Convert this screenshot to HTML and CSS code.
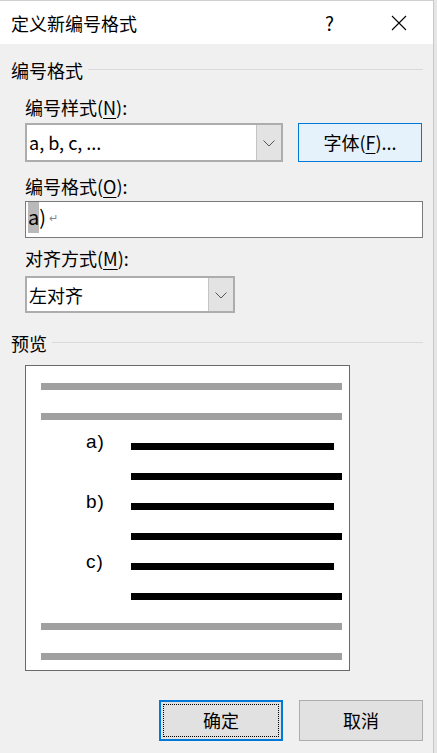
FILE: index.html
```html
<!DOCTYPE html>
<html lang="zh-CN">
<head>
<meta charset="utf-8">
<title>定义新编号格式</title>
<link rel="stylesheet" href="styles.css">
</head>
<body>
<div class="window">
  <div class="titlebar">
    <span class="title">定义新编号格式</span>
    <span class="help">?</span>
    <span class="close">
      <svg width="16" height="16" viewBox="0 0 16 16"><path d="M1 1 L15 15 M15 1 L1 15" stroke="#000" stroke-width="1.1" fill="none"/></svg>
    </span>
  </div>
  <div class="content">
    <div class="group-head"><span>编号格式</span><i class="rule"></i></div>
    <div class="label l-n">编号样式(<u>N</u>):</div>
    <div class="row-n">
      <div class="combo combo-wide">
        <span class="combo-text">a, b, c, ...</span>
        <span class="combo-btn"><svg width="12" height="7" viewBox="0 0 12 7"><path d="M0.5 0.5 L6 6 L11.5 0.5" stroke="#555" stroke-width="1" fill="none"/></svg></span>
      </div>
      <div class="font-btn">字体(<u>F</u>)...</div>
    </div>
    <div class="label l-o">编号格式(<u>O</u>):</div>
    <div class="textfield"><span class="sel">a</span><span class="paren">)</span><span class="ret">↵</span></div>
    <div class="label l-m">对齐方式(<u>M</u>):</div>
    <div class="combo combo-narrow">
      <span class="combo-text">左对齐</span>
      <span class="combo-btn"><svg width="12" height="7" viewBox="0 0 12 7"><path d="M0.5 0.5 L6 6 L11.5 0.5" stroke="#555" stroke-width="1" fill="none"/></svg></span>
    </div>
    <div class="group-head gh-preview"><span>预览</span><i class="rule"></i></div>
    <div class="preview">
      <div class="prow"><i class="gbar"></i></div>
      <div class="prow"><i class="gbar"></i></div>
      <div class="prow"><span class="plabel">a)</span><i class="bbar short"></i></div>
      <div class="prow"><span class="plabel"></span><i class="bbar long"></i></div>
      <div class="prow"><span class="plabel">b)</span><i class="bbar short"></i></div>
      <div class="prow"><span class="plabel"></span><i class="bbar long"></i></div>
      <div class="prow"><span class="plabel">c)</span><i class="bbar short"></i></div>
      <div class="prow"><span class="plabel"></span><i class="bbar long"></i></div>
      <div class="prow"><i class="gbar"></i></div>
      <div class="prow"><i class="gbar"></i></div>
    </div>
    <div class="buttons">
      <div class="btn btn-ok"><span class="focus">确定</span></div>
      <div class="btn">取消</div>
    </div>
  </div>
</div>
</body>
</html>
```
FILE: styles.css
```css
* { box-sizing: border-box; }
html, body { margin: 0; padding: 0; }
body {
  background: #e6e6e6;
  font-family: "Noto Sans CJK SC", "Noto Sans", sans-serif;
  color: #000;
  width: 437px;
  height: 753px;
  overflow: hidden;
}
.window {
  width: 434px;
  height: 753px;
  background: #f0f0f0;
  border-right: 1px solid #c8c8c8;
  border-top: 1px solid #d0d0d0;
}
.titlebar {
  height: 43px;
  background: #fff;
  display: flex;
  align-items: center;
  padding-left: 11px;
}
.title { font-size: 18px; line-height: 24px; flex: 1; }
.help { font-size: 19px; line-height: 24px; width: 66px; text-align: left; }
.close { width: 42px; display: flex; align-items: center; padding-left: 0; }
.close svg { display: block; }

.content { padding: 0 10px 0 11px; display: flex; flex-direction: column; }
.group-head {
  display: flex;
  align-items: center;
  height: 24px;
  margin-top: 14px;
  font-size: 18px;
  line-height: 24px;
}
.group-head .rule {
  flex: 1;
  height: 1px;
  background: #dadada;
  margin-left: 5px;
  margin-top: -2px;
}
.gh-preview { margin-top: 18px; }

.label { font-size: 18px; line-height: 24px; height: 24px; padding-left: 14px; }
.label u { text-decoration-thickness: 1px; text-underline-offset: 3px; }
.l-n { margin-top: 13px; }
.l-o { margin-top: 12px; }
.l-m { margin-top: 8px; }

.row-n { display: flex; margin-top: 4px; margin-left: 14px; gap: 15px; }
.combo {
  display: flex;
  background: #fff;
  border: 2px solid #adadad;
}
.combo-wide { width: 258px; height: 39px; }
.combo-narrow { width: 210px; height: 37px; margin-left: 14px; margin-top: 6px; }
.combo-text { flex: 1; font-size: 18px; line-height: 35px; padding-left: 2px; }
.combo-btn {
  width: 25px;
  background: #e3e3e3;
  border-left: 1px solid #c4c4c4;
  display: flex;
  align-items: center;
  justify-content: center;
  padding-top: 1px;
}
.combo-btn svg { display: block; }
.font-btn {
  width: 124px;
  height: 39px;
  background: #e5f1fb;
  border: 1px solid #0078d7;
  font-size: 18px;
  line-height: 37px;
  text-align: center;
}
.font-btn u { text-decoration-thickness: 1px; text-underline-offset: 3px; }

.textfield {
  margin-top: 3px;
  margin-left: 14px;
  height: 37px;
  width: 398px;
  background: #fff;
  border: 1px solid #7a7a7a;
  display: flex;
  align-items: flex-start;
  padding-left: 2px;
  font-size: 20px;
}
.sel { background: #b9b9b9; line-height: 30px; height: 31px; padding: 0 0 0 0; }
.paren { line-height: 30px; }
.ret { font-size: 11px; color: #888; line-height: 30px; margin-left: 3px; }

.preview {
  margin-top: 10px;
  margin-left: 14px;
  width: 325px;
  height: 306px;
  background: #fff;
  border: 1px solid #6a6a6a;
  padding: 17px 0 0 15px;
  display: flex;
  flex-direction: column;
  gap: 23px;
}
.prow { height: 7px; display: flex; align-items: flex-start; }
.gbar { display: block; width: 301px; height: 7px; background: #a0a0a0; }
.plabel {
  width: 90px;
  padding-left: 45px;
  font-family: "Liberation Sans", Arial, sans-serif;
  font-size: 19px;
  line-height: 20px;
  height: 20px;
  margin-top: -11px;
  letter-spacing: 1px;
}
.bbar { display: block; height: 7px; background: #000; }
.bbar.short { width: 203px; }
.bbar.long { width: 211px; }

.buttons { display: flex; justify-content: flex-end; gap: 16px; margin-top: 29px; padding-right: 0; }
.btn {
  width: 124px;
  height: 41px;
  background: #e1e1e1;
  border: 1px solid #adadad;
  font-size: 18px;
  line-height: 39px;
  text-align: center;
}
.btn-ok { border: 2px solid #0078d7; padding: 2px; }
.btn-ok .focus {
  display: block;
  height: 33px;
  border: 1px dotted #000;
  line-height: 31px;
}
```
